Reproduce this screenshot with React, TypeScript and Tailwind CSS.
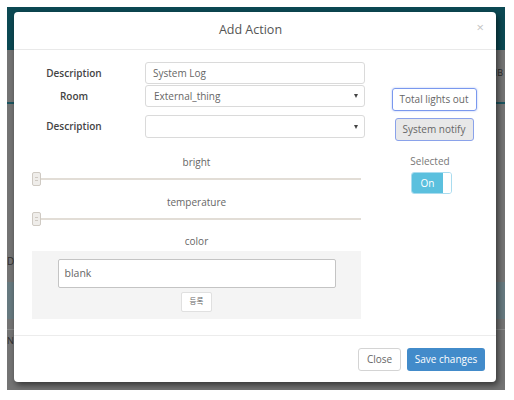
import React from "react";

function Slider() {
  return (
    <div className="relative h-[14px] w-[329px] flex items-center">
      <div className="h-[2px] w-full bg-[#e2ddd6] ml-[1px]" />
      <div className="absolute left-0 top-0 h-[14px] w-[9px] rounded-[2px] border border-[#cfcac3] bg-[#efedea] flex items-center justify-center">
        <div className="h-[4px] w-[3px] border-y border-[#cfcac3]" />
      </div>
    </div>
  );
}

function Caret() {
  return <div className="w-0 h-0 border-l-[2.5px] border-r-[2.5px] border-t-[4px] border-l-transparent border-r-transparent border-t-[#444]" />;
}

export default function App() {
  return (
    <div className="w-[514px] h-[400px] bg-white pt-[7px] pl-[7px]" style={{ fontFamily: "'Open Sans', 'Noto Sans CJK KR', sans-serif" }}>
      <div className="relative w-[498px] h-[383px] bg-[#747474] overflow-hidden flex flex-col">
        <div className="h-[43px] bg-[#0c4953] shrink-0" />
        <div className="flex justify-end pr-[2px] pt-[18px] h-[26px] text-[9px] text-[#2a2a2a] leading-none">HB</div>
        <div className="mt-[26px] h-[2px] bg-[#1c5661]" />
        <div className="mt-[152px] h-[12px] text-[10px] leading-none text-[#303030] pl-[0px]">D</div>
        <div className="mt-[14px] h-[37px] bg-[#677a80]" />
        <div className="mt-[10px] h-[1px] bg-[#8a8a8a]" />
        <div className="mt-[6px] h-[10px] text-[9px] leading-none text-[#303030]">N</div>

        <div className="absolute left-[7px] top-[5px] w-[482px] h-[370px] bg-white rounded-[4px] shadow-[2px_3px_6px_rgba(0,0,0,0.55)] flex flex-col">
          <div className="relative h-[38px] border-b border-[#e9e9e9] flex items-center justify-center pr-[9px] shrink-0">
            <span className="text-[12.5px] text-[#555]">Add Action</span>
            <span className="absolute right-[12px] top-[9px] text-[13px] text-[#c4c4c4] leading-none">×</span>
          </div>

          <div className="h-[286px] border-b border-[#ececec] flex shrink-0">
            <div className="pl-[18px] w-[351px] pt-[12px] flex flex-col">
              <div className="flex items-center h-[22px]">
                <div className="w-[80px] ml-[2px] text-center text-[10px] font-semibold text-[#444]">Description</div>
                <div className="ml-[31px] w-[220px] h-[22px] border border-[#dadada] rounded-[3px] flex items-center pl-[7px] text-[10px] text-[#666]">System Log</div>
              </div>
              <div className="flex items-center h-[22px] mt-[1px]">
                <div className="w-[80px] ml-[2px] text-center text-[10px] font-semibold text-[#444]">Room</div>
                <div className="ml-[31px] w-[220px] h-[22px] border border-[#dadada] rounded-[3px] flex items-center justify-between pl-[8px] pr-[6px] text-[10px] text-[#666]">
                  <span>External_thing</span>
                  <Caret />
                </div>
              </div>
              <div className="flex items-center h-[23px] mt-[8px]">
                <div className="w-[80px] ml-[2px] text-center text-[10px] font-semibold text-[#444]">Description</div>
                <div className="ml-[31px] w-[220px] h-[23px] border border-[#dadada] rounded-[3px] flex items-center justify-end pr-[6px] text-[10px] text-[#666]">
                  <Caret />
                </div>
              </div>

              <div className="mt-[17px] w-[329px] h-[14px] text-center text-[10px] leading-[14px] text-[#666]">bright</div>
              <div className="mt-[3px]"><Slider /></div>
              <div className="mt-[9px] w-[329px] h-[14px] text-center text-[10px] leading-[14px] text-[#666]">temperature</div>
              <div className="mt-[3px]"><Slider /></div>
              <div className="mt-[8px] w-[329px] h-[14px] text-center text-[10px] leading-[14px] text-[#666]">color</div>

              <div className="mt-[3px] w-[329px] h-[68px] bg-[#f4f4f4] flex flex-col items-center pt-[8px]">
                <div className="w-[278px] h-[29px] bg-white border border-[#c4c4c4] rounded-[2px] flex items-center pl-[6px] text-[10.5px] text-[#666]">blank</div>
                <div className="mt-[4px] w-[31px] h-[20px] bg-white border border-[#e0e0e0] rounded-[2px] flex items-center justify-center text-[7.5px] text-[#666]">등록</div>
              </div>
            </div>

            <div className="ml-[25px] w-[88px] pt-[38px] flex flex-col items-center">
              <div className="w-[85px] h-[23px] border border-[#7a98ee] rounded-[3px] shadow-[0_0_2px_rgba(102,140,233,0.6)] flex items-center justify-center text-[10px] text-[#666]">Total lights out</div>
              <div className="mt-[7px] w-[79px] h-[23px] bg-[#e8e8e8] border border-[#8aa2ea] rounded-[3px] flex items-center justify-center text-[10px] text-[#666]">System notify</div>
              <div className="mt-[13px] h-[14px] text-[10px] leading-[14px] text-[#777] -ml-[8px]">Selected</div>
              <div className="mt-[4px] -ml-[5px] w-[41px] h-[22px] rounded-[3px] border border-[#a9dcef] flex overflow-hidden">
                <div className="w-[31px] bg-[#5bc0de] flex items-center justify-center text-[10px] text-white">On</div>
                <div className="flex-1 bg-white" />
              </div>
            </div>
          </div>

          <div className="flex-1 flex items-center justify-end pr-[11px] gap-[6px]">
            <div className="w-[43px] h-[23px] border border-[#d4d4d4] rounded-[3px] flex items-center justify-center text-[10px] text-[#666]">Close</div>
            <div className="w-[78px] h-[23px] bg-[#428bca] rounded-[3px] flex items-center justify-center text-[10px] text-white">Save changes</div>
          </div>
        </div>
      </div>
    </div>
  );
}
